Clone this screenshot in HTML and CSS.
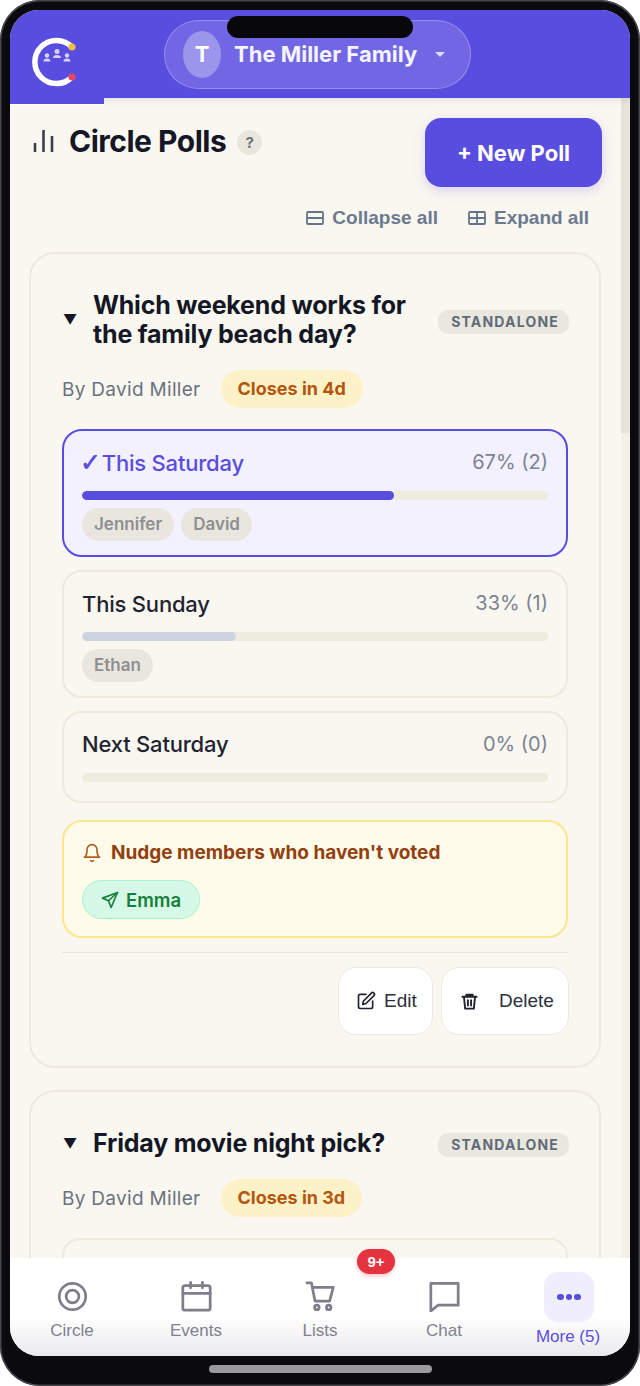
FILE: index.html
```html
<!DOCTYPE html>
<html>
	<head>
		<meta charset="utf-8"/>
		<title>Circle Polls</title>
		<link rel="stylesheet" href="styles.css">
	</head>
	<body>
		<div class="phone">
			<div class="notch"></div>
			<div class="screen">
				<header class="topbar">
					<svg class="logo" width="56" height="64" viewBox="0 0 56 64" fill="none">
						<path d="M45 21 A 21.600 21.600 0 1 0 45 51" stroke="#fff" stroke-width="5.500"/>
						<circle cx="45" cy="21" r="3.600" fill="#f5bd3a"/>
						<circle cx="45" cy="51" r="3.600" fill="#e8475f"/>
						<g fill="#d6d2f8">
							<circle cx="30" cy="25.500" r="2.500"/><path d="M26 32c0-2 1.500-3 4-3s4 1 4 3z"/>
							<circle cx="20" cy="29.500" r="2.200"/><path d="M16.500 35.500c0-2 1.300-3 3.500-3s3.500 1 3.500 3z"/>
							<circle cx="40" cy="29.500" r="2.200"/><path d="M36.500 35.500c0-2 1.300-3 3.500-3s3.500 1 3.500 3z"/>
						</g>
					</svg>
					<div class="family">
						<span class="avatar">T</span>
						<span class="family-name">The Miller Family</span>
						<span class="caret"></span>
					</div>
				</header>
				<div class="body">
					<main class="content">
						<div class="page-head">
							<div class="page-title">
								<svg width="22" height="24" viewBox="0 0 22 24" fill="none" stroke="#3a3f4b" stroke-width="2.600">
									<path d="M2 14v9M10.500 1v22M19 7v16"/>
								</svg>
								<h1>Circle Polls</h1>
								<span class="help">?</span>
							</div>
							<button class="new-poll">+ New Poll</button>
						</div>
						<div class="toggles">
							<span class="toggle">
								<svg width="18" height="14" viewBox="0 0 18 14" fill="none" stroke="#64748b" stroke-width="1.800"><rect x="1" y="1" width="16" height="12" rx="1"/><path d="M1 7h16"/></svg>
								Collapse all
							</span>
							<span class="toggle">
								<svg width="18" height="14" viewBox="0 0 18 14" fill="none" stroke="#64748b" stroke-width="1.800"><rect x="1" y="1" width="16" height="12" rx="1"/><path d="M1 7h16M9 1v12"/></svg>
								Expand all
							</span>
						</div>

						<section class="card">
							<div class="card-head">
								<span class="arrow">▼</span>
								<h2>Which weekend works for the family beach day?</h2>
								<span class="tag">STANDALONE</span>
							</div>
							<div class="meta">
								<span>By David Miller</span>
								<span class="closes">Closes in 4d</span>
							</div>
							<div class="option voted">
								<div class="option-top">
									<span class="option-name"><span class="tick">✓</span>This Saturday</span>
									<span class="option-pct">67% (2)</span>
								</div>
								<div class="bar"><div class="bar-fill" style="width:67%"></div></div>
								<div class="chips"><span class="chip">Jennifer</span><span class="chip">David</span></div>
							</div>
							<div class="option">
								<div class="option-top">
									<span class="option-name">This Sunday</span>
									<span class="option-pct">33% (1)</span>
								</div>
								<div class="bar"><div class="bar-fill" style="width:33%"></div></div>
								<div class="chips"><span class="chip">Ethan</span></div>
							</div>
							<div class="option empty">
								<div class="option-top">
									<span class="option-name">Next Saturday</span>
									<span class="option-pct">0% (0)</span>
								</div>
								<div class="bar"></div>
							</div>
							<div class="nudge">
								<div class="nudge-title">
									<svg width="20" height="20" viewBox="0 0 24 24" fill="none" stroke="#b45f1f" stroke-width="2" stroke-linecap="round" stroke-linejoin="round"><path d="M6 8a6 6 0 0 1 12 0c0 7 3 9 3 9H3s3-2 3-9"/><path d="M10.300 21a1.900 1.900 0 0 0 3.400 0"/></svg>
									Nudge members who haven't voted
								</div>
								<span class="nudge-btn">
									<svg width="18" height="18" viewBox="0 0 24 24" fill="none" stroke="#15803d" stroke-width="2.200" stroke-linecap="round" stroke-linejoin="round"><path d="M22 2 2 9.500l8 3.500 3.500 9z"/><path d="M22 2 10 13"/></svg>
									Emma
								</span>
							</div>
							<div class="actions">
								<button class="action edit">
									<svg width="20" height="20" viewBox="0 0 24 24" fill="none" stroke="#1f2430" stroke-width="2" stroke-linecap="round" stroke-linejoin="round"><path d="M12 4H5a2 2 0 0 0-2 2v13a2 2 0 0 0 2 2h13a2 2 0 0 0 2-2v-7"/><path d="M18.500 2.500a2.100 2.100 0 0 1 3 3L12 15l-4 1 1-4z"/></svg>
									Edit
								</button>
								<button class="action del">
									<svg width="19" height="19" viewBox="0 0 24 24" fill="none" stroke="#1f2430" stroke-width="2.400" stroke-linecap="round" stroke-linejoin="round"><path d="M3 6h18M8 6V3.500h8V6M5 6l1.500 15h11L19 6M10 10.500v6.500M14 10.500v6.500"/></svg>
									Delete
								</button>
							</div>
						</section>

						<section class="card">
							<div class="card-head">
								<span class="arrow">▼</span>
								<h2>Friday movie night pick?</h2>
								<span class="tag">STANDALONE</span>
							</div>
							<div class="meta">
								<span>By David Miller</span>
								<span class="closes">Closes in 3d</span>
							</div>
							<div class="option"></div>
						</section>
					</main>
					<div class="scrolltrack"><div class="scrollthumb"></div></div>
				</div>
				<nav class="tabs">
					<div class="tab">
						<svg width="31" height="31" viewBox="0 0 34 34" fill="none" stroke="#7f7f8c" stroke-width="3"><circle cx="17" cy="17" r="14.500"/><circle cx="17" cy="17" r="7"/></svg>
						<span>Circle</span>
					</div>
					<div class="tab">
						<svg width="31" height="31" viewBox="0 0 34 34" fill="none" stroke="#7f7f8c" stroke-width="3" stroke-linecap="round" stroke-linejoin="round"><rect x="2" y="5" width="30" height="27" rx="2.500"/><path d="M2 13.500h30M10.500 1.500v6M23.500 1.500v6"/></svg>
						<span>Events</span>
					</div>
					<div class="tab">
						<svg width="31" height="31" viewBox="0 0 34 34" fill="none" stroke="#7f7f8c" stroke-width="3" stroke-linecap="round" stroke-linejoin="round"><path d="M2 2h5l4 20h16l4-15H9"/><circle cx="13" cy="29" r="2.500"/><circle cx="26" cy="29" r="2.500"/></svg>
						<span>Lists</span>
						<span class="badge">9+</span>
					</div>
					<div class="tab">
						<svg width="31" height="31" viewBox="0 0 34 34" fill="none" stroke="#7f7f8c" stroke-width="3" stroke-linejoin="round"><path d="M2 2.500h30v24H10L2 33z"/></svg>
						<span>Chat</span>
					</div>
					<div class="tab tab-more">
						<div class="more-box"><i></i><i></i><i></i></div>
						<span>More (5)</span>
					</div>
				</nav>
			</div>
			<div class="homebar"></div>
		</div>
	</body>
</html>
```

FILE: styles.css
```css
* {
	margin: 0;
	padding: 0;
	box-sizing: border-box;
}

body {
	width: 640px;
	height: 1386px;
	background-color: #fff;
	overflow: hidden;
	font-family: Inter, "Liberation Sans", sans-serif;
}

button {
	font-family: inherit;
	cursor: pointer;
}

/*phone frame*/
.phone {
	position: relative;
	width: 640px;
	height: 1386px;
	padding: 10px 10px 30px;
	background-color: #0b0b0f;
	border-radius: 40px;
	box-shadow: inset 0 0 0 1.500px #45454a;
	overflow: hidden;
}

.notch {
	position: absolute;
	top: 16px;
	left: 227px;
	width: 186px;
	height: 22px;
	background-color: #08080b;
	border-radius: 11px;
	z-index: 5;
}

.homebar {
	position: absolute;
	left: 209px;
	bottom: 13px;
	width: 223px;
	height: 8px;
	background-color: #9a9a9e;
	border-radius: 4px;
}

.screen {
	display: flex;
	flex-direction: column;
	height: 1346px;
	background-color: #faf7f0;
	border-radius: 29px;
	overflow: hidden;
}

/*top bar*/
.topbar {
	position: relative;
	flex: none;
	display: flex;
	align-items: center;
	height: 88px;
	padding-left: 17px;
	background-color: #594de0;
	box-shadow: 0 2px 6px rgba(60, 50, 120, 0.12);
	z-index: 2;
}

.topbar::after {
	content: "";
	position: absolute;
	left: 0;
	top: 88px;
	width: 94px;
	height: 6px;
	background-color: #594de0;
	border-bottom: 1px solid #fff;
}

.logo {
	flex: none;
	margin-top: 8px;
}

.family {
	display: flex;
	align-items: center;
	width: 307px;
	height: 69px;
	margin-left: 81px;
	padding-left: 18px;
	background-color: rgba(255, 255, 255, 0.15);
	border: 1px solid rgba(255, 255, 255, 0.25);
	border-radius: 35px;
}

.avatar {
	display: flex;
	align-items: center;
	justify-content: center;
	width: 38px;
	height: 47px;
	background-color: rgba(255, 255, 255, 0.3);
	border-radius: 50%;
	font-size: 22px;
	font-weight: 700;
	color: #fff;
}

.family-name {
	margin-left: 13px;
	font-size: 22px;
	font-weight: 700;
	color: #f4f3ff;
	white-space: nowrap;
}

.caret {
	margin-left: 18px;
	border-left: 5px solid transparent;
	border-right: 5px solid transparent;
	border-top: 5px solid #dedbfa;
}

/*content*/
.body {
	flex: 1;
	display: flex;
	min-height: 0;
}

.content {
	flex: 1;
	min-width: 0;
	padding: 20px 20px 0 19px;
	overflow: hidden;
}

.scrolltrack {
	flex: none;
	width: 9px;
	background-color: #f3f0e5;
}

.scrollthumb {
	height: 335px;
	background-color: #e6e3d9;
}

.page-head {
	display: flex;
	align-items: flex-start;
	justify-content: space-between;
}

.page-title {
	display: flex;
	align-items: center;
	gap: 14px;
	margin-top: 5px;
	padding-left: 4px;
}

.page-title h1 {
	font-size: 30px;
	font-weight: 700;
	letter-spacing: -0.5px;
	color: #141726;
}

.help {
	width: 25px;
	height: 25px;
	margin-top: 3px;
	margin-left: -3px;
	background-color: #e8e6dd;
	border-radius: 50%;
	font-size: 15px;
	font-weight: 700;
	line-height: 25px;
	text-align: center;
	color: #6b7280;
}

.new-poll {
	width: 177px;
	height: 69px;
	margin-right: -1px;
	background-color: #594de0;
	border: none;
	border-radius: 16px;
	box-shadow: 0 4px 12px rgba(89, 77, 224, 0.2);
	font-size: 22px;
	font-weight: 700;
	color: #fff;
}

.toggles {
	display: flex;
	justify-content: flex-end;
	gap: 30px;
	margin-top: 19px;
	padding-right: 12px;
}

.toggle {
	display: flex;
	align-items: center;
	gap: 8px;
	font-family: "Liberation Sans", sans-serif;
	font-size: 19px;
	font-weight: 700;
	line-height: 24px;
	color: #6b7a8e;
}

/*poll cards*/
.card {
	margin-top: 22px;
	padding: 37px 31px 31px;
	border: 2px solid #ede9dd;
	border-radius: 26px;
}

.card-head {
	display: flex;
	align-items: center;
}

.arrow {
	flex: none;
	width: 31px;
	padding-left: 1px;
	font-size: 14px;
	line-height: 18px;
	color: #141726;
}

.card-head h2 {
	flex: 1;
	margin-right: 24px;
	font-size: 25px;
	font-weight: 700;
	line-height: 29px;
	letter-spacing: -0.2px;
	color: #141726;
}

.tag {
	flex: none;
	margin-top: 3px;
	margin-right: -1px;
	padding: 0 10px 0 13px;
	height: 24px;
	background-color: #e9e7de;
	border-radius: 10px;
	font-size: 14px;
	font-weight: 700;
	line-height: 24px;
	letter-spacing: 1.200px;
	color: #5f6b7a;
}

.meta {
	display: flex;
	align-items: center;
	gap: 20px;
	margin-top: 21px;
	font-size: 19px;
	letter-spacing: 0.3px;
	color: #6b7280;
}

.closes {
	padding: 0 17px;
	height: 38px;
	background-color: #fdf1c8;
	border-radius: 19px;
	font-size: 18px;
	font-weight: 700;
	line-height: 38px;
	letter-spacing: 0;
	color: #b4560d;
}

.option {
	margin-top: 13px;
	padding: 18px 18px 14px;
	border: 2px solid #ede9dd;
	border-radius: 20px;
}

.meta + .option {
	margin-top: 21px;
}

.option.voted {
	background-color: #f3f1ff;
	border-color: #594de0;
}

.option-top {
	display: flex;
	align-items: flex-start;
	justify-content: space-between;
	height: 42px;
}

.option-name {
	font-size: 22px;
	font-weight: 500;
	line-height: 28px;
	letter-spacing: -0.2px;
	color: #1f2430;
}

.empty .option-name {
	line-height: 26px;
}

.voted .option-name {
	color: #594de0;
}

.tick {
	margin-left: -2px;
	margin-right: 1px;
	font-family: "DejaVu Sans", sans-serif;
	font-size: 25px;
	font-weight: 700;
	-webkit-text-stroke: 0.6px #594de0;
}

.option-pct {
	font-size: 20px;
	line-height: 26px;
	color: #7a8392;
}

.bar {
	height: 9px;
	background-color: #eeebdf;
	border-radius: 5px;
	overflow: hidden;
}

.bar:last-child {
	margin-bottom: 5px;
}

.bar-fill {
	height: 100%;
	background-color: #ccd4e0;
	border-radius: 5px;
}

.voted .bar-fill {
	background-color: #594de0;
}

.chips {
	display: flex;
	gap: 7px;
	margin-top: 8px;
}

.chip {
	padding: 0 12px;
	height: 33px;
	background-color: #e8e6dd;
	border-radius: 17px;
	font-size: 17px;
	font-weight: 600;
	line-height: 33px;
	color: #8f8f93;
}

.nudge {
	margin-top: 17px;
	height: 118px;
	padding: 18px;
	background-color: #fffbeb;
	border: 2px solid #fde68a;
	border-radius: 20px;
}

.nudge-title {
	display: flex;
	align-items: center;
	gap: 9px;
	font-size: 19px;
	font-weight: 700;
	line-height: 26px;
	color: #92400e;
}

.nudge-btn {
	display: inline-flex;
	align-items: center;
	gap: 7px;
	margin-top: 14px;
	height: 39px;
	padding: 0 18px;
	background-color: #d6f8e6;
	border: 1px solid #a7f3d0;
	border-radius: 20px;
	font-size: 18.500px;
	font-weight: 600;
	color: #15803d;
}

.actions {
	display: flex;
	justify-content: flex-end;
	gap: 8px;
	margin-top: 14px;
	padding-top: 14px;
	border-top: 1px solid #e8e4d6;
}

.action {
	display: flex;
	align-items: center;
	height: 68px;
	background-color: #fff;
	border: 1.500px solid #ede9dd;
	border-radius: 18px;
	font-family: "Liberation Sans", sans-serif;
	font-size: 19px;
	color: #2b303c;
}

.edit {
	width: 95px;
	gap: 8px;
	padding-left: 17px;
}

.del {
	width: 128px;
	margin-right: -1px;
	gap: 20px;
	padding-left: 18px;
}

/*bottom tabs*/
.tabs {
	position: relative;
	flex: none;
	display: flex;
	height: 98px;
	padding-top: 23px;
	background: linear-gradient(#fff 60%, #e9e9ec 100%);
	z-index: 2;
}

.tab {
	position: relative;
	width: 124px;
	display: flex;
	flex-direction: column;
	align-items: center;
	font-family: "Liberation Sans", sans-serif;
	font-size: 17px;
	color: #808190;
}

.tab span:not(.badge) {
	margin-top: 9px;
}

.tab-more {
	margin-top: -9px;
	color: #594de0;
}

.tab-more span:not(.badge) {
	margin-top: 5px;
}

.more-box {
	display: flex;
	align-items: center;
	justify-content: center;
	gap: 2px;
	width: 50px;
	height: 50px;
	margin-left: 2px;
	background-color: #f0eefd;
	border-radius: 14px;
}

.more-box i {
	width: 6.500px;
	height: 6.500px;
	background-color: #594de0;
	border-radius: 50%;
}

.badge {
	position: absolute;
	top: -32px;
	left: 99px;
	width: 38px;
	height: 25px;
	background-color: #e5343f;
	border-radius: 13px;
	box-shadow: 0 2px 4px rgba(229, 52, 63, 0.3);
	font-size: 15px;
	font-weight: 700;
	line-height: 25px;
	text-align: center;
	color: #fff;
}
```
